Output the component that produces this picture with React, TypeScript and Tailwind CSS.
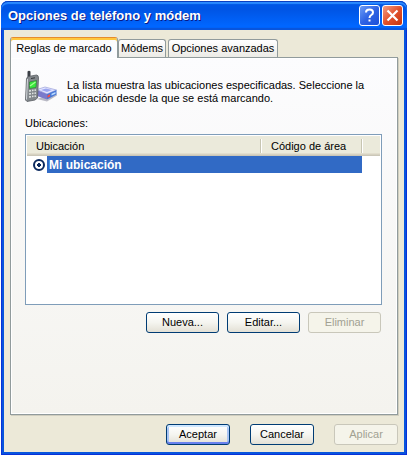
import { useState } from 'react';
import type { ReactNode } from 'react';
import clsx from 'clsx';

const TABS = ['Reglas de marcado', 'Módems', 'Opciones avanzadas'];

interface XpButtonProps {
  children: ReactNode;
  className?: string;
  disabled?: boolean;
  primary?: boolean;
}

function XpButton({ children, className, disabled, primary }: XpButtonProps) {
  return (
    <button
      type="button"
      disabled={disabled}
      className={clsx(
        'flex h-[21px] items-center justify-center rounded-[3px] border text-[11px]',
        disabled
          ? 'border-[#c9c7ba] bg-[#f5f4ea] text-[#a1a192]'
          : 'border-[#003c74] bg-linear-to-b from-white via-[#f5f5f0] to-[#e3e0d5] text-black',
        primary &&
          'shadow-[inset_0_2px_0_#cee7ff,inset_0_-2px_0_#6982ee,inset_2px_0_0_#a9c5f4,inset_-2px_0_0_#a9c5f4]',
        className,
      )}
    >
      {children}
    </button>
  );
}

function PhoneModemIcon() {
  return (
    <svg className="h-8 w-8 shrink-0" viewBox="0 0 32 32" aria-hidden="true">
      {/* modem */}
      <path d="M12 29l10 2.500 10-6-1-3z" fill="#b9b9c4" />
      <path d="M12 19.500l8-2.500 11.500 3L22 24z" fill="#e3e5ff" stroke="#9a9fd8" strokeWidth=".7" />
      <path d="M16 20l5-1.500 6 1.500-5 2z" fill="#9ba6f0" />
      <path d="M12 20l10 4v5.500L12 26z" fill="#7b7acb" />
      <path d="M22 24l9.500-4v4.500L22 29.500z" fill="#4a78d6" />
      <path d="M22.500 25.500l2.500-1.200v2.200l-2.500 1.200z" fill="#ff4b3e" />
      <path d="M26.500 23.800l4-1.900v1.800l-4 1.900z" fill="#b9dcff" />
      {/* phone */}
      <path d="M2.500 1.500Q4 0 5.500 1.500V8h-3z" fill="#3b3f45" />
      <path d="M1.500 8.500Q2 6.500 5 6.200l6.500-1.200Q13.500 5 13.500 8L12.500 28 10 30 2 31.500.5 30z" fill="#83888c" stroke="#5a5e63" strokeWidth=".8" />
      <path d="M2.500 9l-1 20.500" stroke="#d5d9dd" strokeWidth="1" />
      <path d="M4.500 12l7-1.500-.5 7-6.500 1z" fill="#37e83b" stroke="#2f7a38" strokeWidth=".7" />
      <path d="M5 16l5.500-4" stroke="#a5ff91" strokeWidth="1.200" />
      <path d="M6 8.500l4-.7" stroke="#34383b" strokeWidth="1" />
      <path
        d="M4 21l2-.3M7 20.500l1.500-.2M9.500 20.200l1.500-.2M4 24l2-.3M7 23.500l1.500-.2M9.500 23.200l1.500-.2M4 27l2-.3M7 26.500l1.500-.2M9.500 26.200l1.500-.2"
        stroke="#e1e5e3"
        strokeWidth="1.400"
      />
    </svg>
  );
}

function TitleBar() {
  return (
    <header className="flex h-[29px] shrink-0 items-center justify-between rounded-t-[7px] bg-linear-to-b from-[#0058e6] from-0% via-[#0055e5] via-30% to-[#0066ff] to-85% pr-1 pl-[7px] shadow-[inset_0_1px_0_#0a3fc0,inset_0_3px_1px_#2a8bff,inset_0_-2px_1px_#0047c8]">
      <h1 className="text-[13px] font-bold text-white [text-shadow:1px_1px_0_#0a1883]">
        Opciones de teléfono y módem
      </h1>
      <div className="flex gap-0.5">
        <button
          type="button"
          aria-label="Ayuda"
          className="flex h-[21px] w-[21px] items-center justify-center rounded-[3px] border border-white bg-linear-to-br from-[#6d9bf5] via-[#2f63e4] to-[#1c4fd8]"
        >
          <svg className="h-[15px] w-[15px]" viewBox="0 0 15 15" fill="none" aria-hidden="true">
            <path d="M4 4.500Q4 1.500 7.500 1.500T11 4.500Q11 6 9.300 7T7.500 10" stroke="#fff" strokeWidth="2" />
            <path d="M6.500 11.500h2v2h-2z" fill="#fff" />
          </svg>
        </button>
        <button
          type="button"
          aria-label="Cerrar"
          className="flex h-[21px] w-[21px] items-center justify-center rounded-[3px] border border-white bg-linear-to-br from-[#f09c82] via-[#e2512b] to-[#c4340c]"
        >
          <svg className="h-[15px] w-[15px]" viewBox="0 0 15 15" aria-hidden="true">
            <path d="M2.500 2.500l10 10M12.500 2.500l-10 10" stroke="#fff" strokeWidth="2.200" />
          </svg>
        </button>
      </div>
    </header>
  );
}

function LocationList() {
  return (
    <div className="h-[171px] border border-[#7f9db9] bg-white p-px">
      <table aria-labelledby="locations" className="w-full table-fixed border-collapse text-[11px]">
        <colgroup>
          <col />
          <col className="w-[101px]" />
          <col className="w-[18px]" />
        </colgroup>
        <thead>
          <tr className="h-5 bg-[#ebeadb] shadow-[inset_0_-1px_0_#cbc7b8,inset_0_-2px_0_#d6d2c2,inset_0_-3px_0_#e2dece]">
            <th scope="col" className="p-0 text-left font-normal">
              <span className="flex h-3.5 items-center border-r border-[#c7c5b2] pl-[9px]">Ubicación</span>
            </th>
            <th scope="col" className="p-0 text-left font-normal">
              <span className="flex h-3.5 items-center border-r border-l border-r-[#c7c5b2] border-l-white pl-[9px]">
                Código de área
              </span>
            </th>
            <td className="p-0">
              <span className="block h-3.5 border-l border-white" />
            </td>
          </tr>
        </thead>
        <tbody>
          <tr className="h-[17px]">
            <td className="p-0">
              <label className="flex h-[17px] items-center">
                <span className="flex w-5 justify-end pr-0.5">
                  <input
                    type="radio"
                    name="location"
                    defaultChecked
                    className="m-0 h-3 w-3 appearance-none rounded-full border-2 border-[#0c2a5e] bg-[radial-gradient(circle,#0c2a5e_2px,#fff_2px)]"
                  />
                </span>
                <span className="flex h-full flex-1 items-center bg-[#316ac5] pl-0.5 text-xs font-bold text-white">
                  Mi ubicación
                </span>
              </label>
            </td>
            <td className="bg-[#316ac5] p-0" />
            <td className="p-0" />
          </tr>
        </tbody>
      </table>
    </div>
  );
}

export default function App() {
  const [tab, setTab] = useState(0);

  return (
    <div className="flex min-h-screen flex-col bg-white pt-px pb-0.5 pl-px font-['Liberation_Sans',Arial,sans-serif] text-[11px] text-black">
      <div className="flex flex-1 flex-col rounded-t-[7px] bg-[#0831d9]">
        <TitleBar />
        <main className="mx-[3px] mb-[3px] flex flex-1 flex-col bg-[#ece9d8] px-1.5 pt-[7px] pb-[7px] shadow-[0_0_0_2px_#0855dd]">
          <div role="tablist" className="flex items-end">
            {TABS.map((label, i) => (
              <button
                key={label}
                type="button"
                role="tab"
                aria-selected={i === tab}
                onClick={() => setTab(i)}
                className={clsx(
                  'flex items-center justify-center rounded-t-[3px] border border-b-0 whitespace-nowrap',
                  i === 0 && 'w-[108px]',
                  i === 1 && 'w-12',
                  i === 2 && 'ml-0.5 w-[110px]',
                  i === tab
                    ? 'relative -mb-px h-[21px] border-[#919b9c] border-t-[#e68b2c] bg-[#fcfcfe] shadow-[inset_0_2px_0_#ffc73c]'
                    : 'h-[18px] border-[#919b9c] bg-linear-to-b from-white to-[#ecebe6]',
                )}
              >
                {label}
              </button>
            ))}
          </div>

          <section
            role="tabpanel"
            aria-label={TABS[tab]}
            className="flex flex-1 flex-col border border-[#919b9c] bg-linear-to-b from-[#fcfcfe] to-[#f4f3ee] pt-3 pr-[15px] pl-3.5 shadow-[inset_0_0_0_1px_#fff,1px_1px_0_#d0cebf]"
          >
            <div className="flex gap-[10px]">
              <PhoneModemIcon />
              <p className="mt-[9px] leading-[13px]">
                La lista muestra las ubicaciones especificadas. Seleccione la ubicación desde la que se está marcando.
              </p>
            </div>
            <p id="locations" className="mt-[11px] mb-1 leading-[14px]">
              Ubicaciones:
            </p>
            <LocationList />
            <div className="mt-[7px] mr-px flex justify-end gap-2">
              <XpButton className="w-[73px]">Nueva...</XpButton>
              <XpButton className="w-[73px]">Editar...</XpButton>
              <XpButton className="w-[73px]" disabled>
                Eliminar
              </XpButton>
            </div>
          </section>

          <footer className="mt-[9px] flex justify-end gap-5">
            <XpButton className="w-16" primary>
              Aceptar
            </XpButton>
            <XpButton className="w-16">Cancelar</XpButton>
            <XpButton className="w-16" disabled>
              Aplicar
            </XpButton>
          </footer>
        </main>
      </div>
    </div>
  );
}
